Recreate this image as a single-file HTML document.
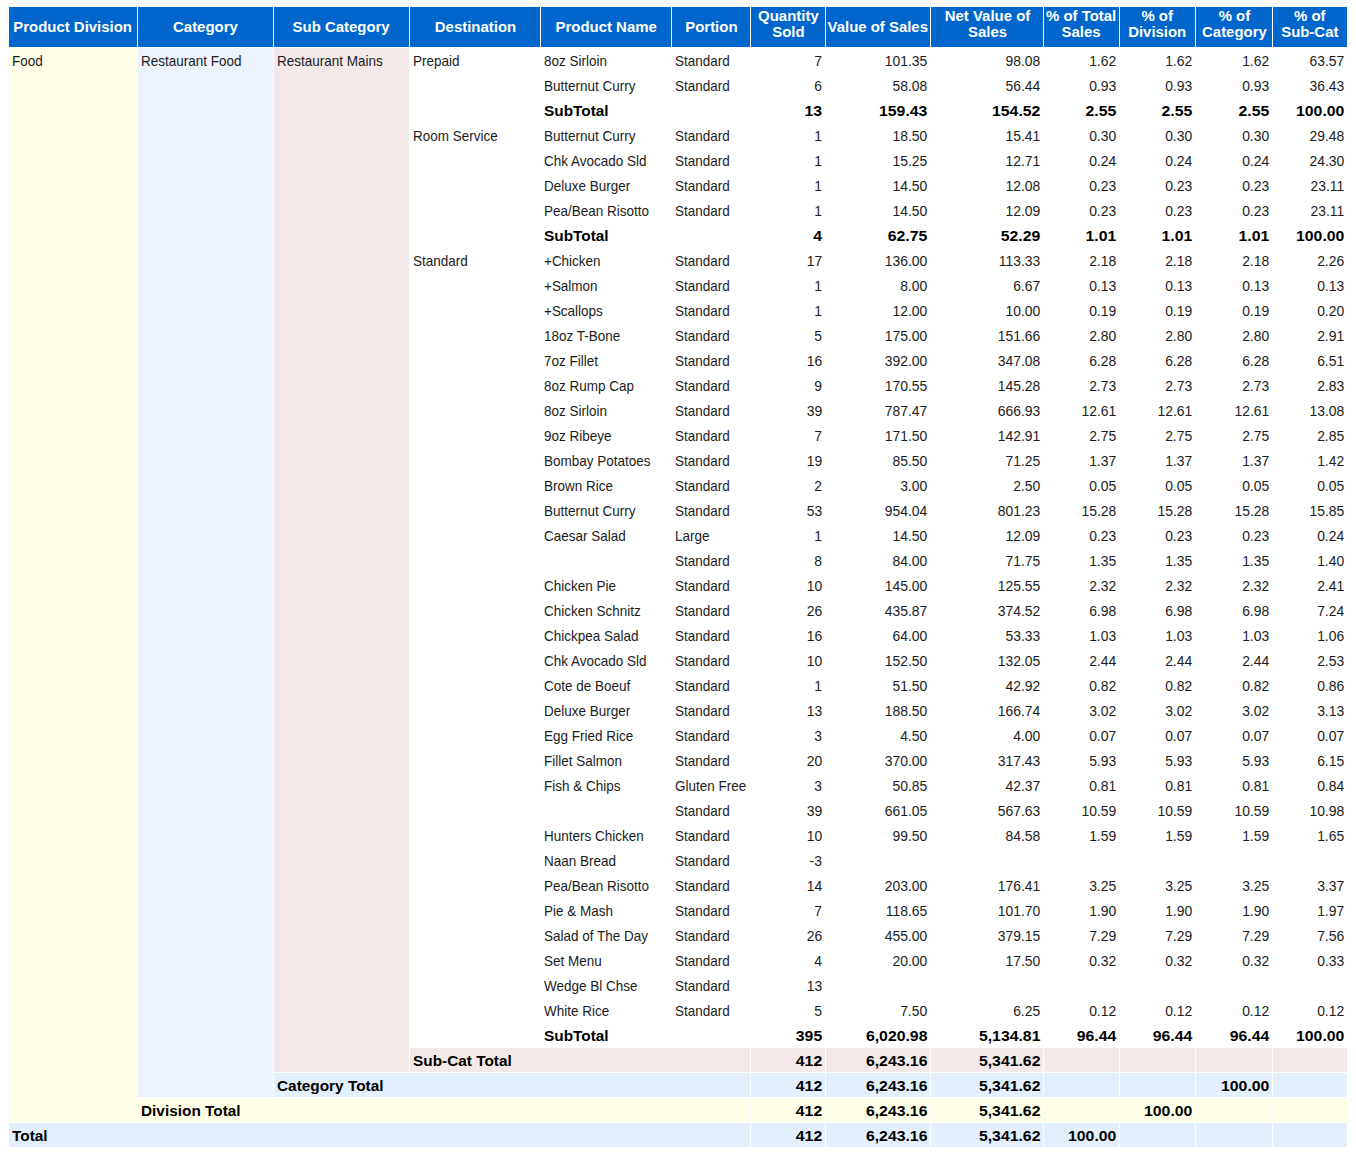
<!DOCTYPE html>
<html><head><meta charset="utf-8"><style>
html,body{margin:0;padding:0;background:#fff;width:1356px;height:1156px;overflow:hidden;position:relative}
.b{position:absolute}
.t{position:absolute;height:24px;line-height:26px;font-family:"Liberation Sans",sans-serif;font-size:14.5px;color:#1c1c1c;white-space:nowrap;padding:0 3px 0 2.5px;box-sizing:border-box;overflow:visible}
.t span{display:inline-block;transform:scaleX(0.93);transform-origin:0 50%}
.r{text-align:right}
.r span{transform-origin:100% 50%}
.rn span{transform:scaleX(0.96)}
.bt{font-weight:bold;color:#000}
.bt span{transform:scaleX(1.06);margin-left:0.5px}
.bn{font-weight:bold;color:#000}
.bn span{transform:scaleX(1.09)}
.h{position:absolute;display:flex;align-items:center;justify-content:center;text-align:center;font-family:"Liberation Sans",sans-serif;font-size:14.5px;font-weight:bold;color:#fff;line-height:16px;box-sizing:border-box;white-space:nowrap}
.h span{display:inline-block;transform:scaleX(1.03)}
.h2{padding-bottom:7px}
</style></head><body>
<div class="b" style="left:9px;top:7px;width:128px;height:40px;background:#0066cc"></div>
<div class="h" style="left:9px;top:7px;width:128px;height:40px"><span>Product Division</span></div>
<div class="b" style="left:138px;top:7px;width:135px;height:40px;background:#0066cc"></div>
<div class="h" style="left:138px;top:7px;width:135px;height:40px"><span>Category</span></div>
<div class="b" style="left:274px;top:7px;width:135px;height:40px;background:#0066cc"></div>
<div class="h" style="left:274px;top:7px;width:135px;height:40px"><span>Sub Category</span></div>
<div class="b" style="left:410px;top:7px;width:130px;height:40px;background:#0066cc"></div>
<div class="h" style="left:410px;top:7px;width:130px;height:40px"><span>Destination</span></div>
<div class="b" style="left:541px;top:7px;width:130px;height:40px;background:#0066cc"></div>
<div class="h" style="left:541px;top:7px;width:130px;height:40px"><span>Product Name</span></div>
<div class="b" style="left:672px;top:7px;width:78px;height:40px;background:#0066cc"></div>
<div class="h" style="left:672px;top:7px;width:78px;height:40px"><span>Portion</span></div>
<div class="b" style="left:751px;top:7px;width:74px;height:40px;background:#0066cc"></div>
<div class="h h2" style="left:751px;top:7px;width:74px;height:40px"><span>Quantity<br>Sold</span></div>
<div class="b" style="left:826px;top:7px;width:104px;height:40px;background:#0066cc"></div>
<div class="h" style="left:826px;top:7px;width:104px;height:40px"><span>Value of Sales</span></div>
<div class="b" style="left:931px;top:7px;width:112px;height:40px;background:#0066cc"></div>
<div class="h h2" style="left:931px;top:7px;width:112px;height:40px"><span>Net Value of<br>Sales</span></div>
<div class="b" style="left:1044px;top:7px;width:75px;height:40px;background:#0066cc"></div>
<div class="h h2" style="left:1044px;top:7px;width:75px;height:40px"><span>% of Total<br>Sales</span></div>
<div class="b" style="left:1120px;top:7px;width:75px;height:40px;background:#0066cc"></div>
<div class="h h2" style="left:1120px;top:7px;width:75px;height:40px"><span>% of<br>Division</span></div>
<div class="b" style="left:1196px;top:7px;width:76px;height:40px;background:#0066cc"></div>
<div class="h h2" style="left:1196px;top:7px;width:76px;height:40px"><span>% of<br>Category</span></div>
<div class="b" style="left:1273px;top:7px;width:74px;height:40px;background:#0066cc"></div>
<div class="h h2" style="left:1273px;top:7px;width:74px;height:40px"><span>% of<br>Sub-Cat</span></div>
<div class="b" style="left:9px;top:48px;width:128px;height:1074px;background:#ffffe8"></div>
<div class="b" style="left:138px;top:48px;width:135px;height:1049px;background:#edf3fe"></div>
<div class="b" style="left:274px;top:48px;width:135px;height:1024px;background:#f3e9e9"></div>
<div class="t" style="left:9px;top:48px;width:128px"><span>Food</span></div>
<div class="t" style="left:138px;top:48px;width:135px"><span>Restaurant Food</span></div>
<div class="t" style="left:274px;top:48px;width:135px"><span>Restaurant Mains</span></div>
<div class="t" style="left:410px;top:48px;width:130px"><span>Prepaid</span></div>
<div class="t" style="left:410px;top:123px;width:130px"><span>Room Service</span></div>
<div class="t" style="left:410px;top:248px;width:130px"><span>Standard</span></div>
<div class="t" style="left:541px;top:48px;width:130px"><span>8oz Sirloin</span></div>
<div class="t" style="left:672px;top:48px;width:78px"><span>Standard</span></div>
<div class="t rn r" style="left:751px;top:48px;width:74px"><span>7</span></div>
<div class="t rn r" style="left:826px;top:48px;width:104px"><span>101.35</span></div>
<div class="t rn r" style="left:931px;top:48px;width:112px"><span>98.08</span></div>
<div class="t rn r" style="left:1044px;top:48px;width:75px"><span>1.62</span></div>
<div class="t rn r" style="left:1120px;top:48px;width:75px"><span>1.62</span></div>
<div class="t rn r" style="left:1196px;top:48px;width:76px"><span>1.62</span></div>
<div class="t rn r" style="left:1273px;top:48px;width:74px"><span>63.57</span></div>
<div class="t" style="left:541px;top:73px;width:130px"><span>Butternut Curry</span></div>
<div class="t" style="left:672px;top:73px;width:78px"><span>Standard</span></div>
<div class="t rn r" style="left:751px;top:73px;width:74px"><span>6</span></div>
<div class="t rn r" style="left:826px;top:73px;width:104px"><span>58.08</span></div>
<div class="t rn r" style="left:931px;top:73px;width:112px"><span>56.44</span></div>
<div class="t rn r" style="left:1044px;top:73px;width:75px"><span>0.93</span></div>
<div class="t rn r" style="left:1120px;top:73px;width:75px"><span>0.93</span></div>
<div class="t rn r" style="left:1196px;top:73px;width:76px"><span>0.93</span></div>
<div class="t rn r" style="left:1273px;top:73px;width:74px"><span>36.43</span></div>
<div class="t bt" style="left:541px;top:98px;width:130px"><span>SubTotal</span></div>
<div class="t bn r" style="left:751px;top:98px;width:74px"><span>13</span></div>
<div class="t bn r" style="left:826px;top:98px;width:104px"><span>159.43</span></div>
<div class="t bn r" style="left:931px;top:98px;width:112px"><span>154.52</span></div>
<div class="t bn r" style="left:1044px;top:98px;width:75px"><span>2.55</span></div>
<div class="t bn r" style="left:1120px;top:98px;width:75px"><span>2.55</span></div>
<div class="t bn r" style="left:1196px;top:98px;width:76px"><span>2.55</span></div>
<div class="t bn r" style="left:1273px;top:98px;width:74px"><span>100.00</span></div>
<div class="t" style="left:541px;top:123px;width:130px"><span>Butternut Curry</span></div>
<div class="t" style="left:672px;top:123px;width:78px"><span>Standard</span></div>
<div class="t rn r" style="left:751px;top:123px;width:74px"><span>1</span></div>
<div class="t rn r" style="left:826px;top:123px;width:104px"><span>18.50</span></div>
<div class="t rn r" style="left:931px;top:123px;width:112px"><span>15.41</span></div>
<div class="t rn r" style="left:1044px;top:123px;width:75px"><span>0.30</span></div>
<div class="t rn r" style="left:1120px;top:123px;width:75px"><span>0.30</span></div>
<div class="t rn r" style="left:1196px;top:123px;width:76px"><span>0.30</span></div>
<div class="t rn r" style="left:1273px;top:123px;width:74px"><span>29.48</span></div>
<div class="t" style="left:541px;top:148px;width:130px"><span>Chk Avocado Sld</span></div>
<div class="t" style="left:672px;top:148px;width:78px"><span>Standard</span></div>
<div class="t rn r" style="left:751px;top:148px;width:74px"><span>1</span></div>
<div class="t rn r" style="left:826px;top:148px;width:104px"><span>15.25</span></div>
<div class="t rn r" style="left:931px;top:148px;width:112px"><span>12.71</span></div>
<div class="t rn r" style="left:1044px;top:148px;width:75px"><span>0.24</span></div>
<div class="t rn r" style="left:1120px;top:148px;width:75px"><span>0.24</span></div>
<div class="t rn r" style="left:1196px;top:148px;width:76px"><span>0.24</span></div>
<div class="t rn r" style="left:1273px;top:148px;width:74px"><span>24.30</span></div>
<div class="t" style="left:541px;top:173px;width:130px"><span>Deluxe Burger</span></div>
<div class="t" style="left:672px;top:173px;width:78px"><span>Standard</span></div>
<div class="t rn r" style="left:751px;top:173px;width:74px"><span>1</span></div>
<div class="t rn r" style="left:826px;top:173px;width:104px"><span>14.50</span></div>
<div class="t rn r" style="left:931px;top:173px;width:112px"><span>12.08</span></div>
<div class="t rn r" style="left:1044px;top:173px;width:75px"><span>0.23</span></div>
<div class="t rn r" style="left:1120px;top:173px;width:75px"><span>0.23</span></div>
<div class="t rn r" style="left:1196px;top:173px;width:76px"><span>0.23</span></div>
<div class="t rn r" style="left:1273px;top:173px;width:74px"><span>23.11</span></div>
<div class="t" style="left:541px;top:198px;width:130px"><span>Pea/Bean Risotto</span></div>
<div class="t" style="left:672px;top:198px;width:78px"><span>Standard</span></div>
<div class="t rn r" style="left:751px;top:198px;width:74px"><span>1</span></div>
<div class="t rn r" style="left:826px;top:198px;width:104px"><span>14.50</span></div>
<div class="t rn r" style="left:931px;top:198px;width:112px"><span>12.09</span></div>
<div class="t rn r" style="left:1044px;top:198px;width:75px"><span>0.23</span></div>
<div class="t rn r" style="left:1120px;top:198px;width:75px"><span>0.23</span></div>
<div class="t rn r" style="left:1196px;top:198px;width:76px"><span>0.23</span></div>
<div class="t rn r" style="left:1273px;top:198px;width:74px"><span>23.11</span></div>
<div class="t bt" style="left:541px;top:223px;width:130px"><span>SubTotal</span></div>
<div class="t bn r" style="left:751px;top:223px;width:74px"><span>4</span></div>
<div class="t bn r" style="left:826px;top:223px;width:104px"><span>62.75</span></div>
<div class="t bn r" style="left:931px;top:223px;width:112px"><span>52.29</span></div>
<div class="t bn r" style="left:1044px;top:223px;width:75px"><span>1.01</span></div>
<div class="t bn r" style="left:1120px;top:223px;width:75px"><span>1.01</span></div>
<div class="t bn r" style="left:1196px;top:223px;width:76px"><span>1.01</span></div>
<div class="t bn r" style="left:1273px;top:223px;width:74px"><span>100.00</span></div>
<div class="t" style="left:541px;top:248px;width:130px"><span>+Chicken</span></div>
<div class="t" style="left:672px;top:248px;width:78px"><span>Standard</span></div>
<div class="t rn r" style="left:751px;top:248px;width:74px"><span>17</span></div>
<div class="t rn r" style="left:826px;top:248px;width:104px"><span>136.00</span></div>
<div class="t rn r" style="left:931px;top:248px;width:112px"><span>113.33</span></div>
<div class="t rn r" style="left:1044px;top:248px;width:75px"><span>2.18</span></div>
<div class="t rn r" style="left:1120px;top:248px;width:75px"><span>2.18</span></div>
<div class="t rn r" style="left:1196px;top:248px;width:76px"><span>2.18</span></div>
<div class="t rn r" style="left:1273px;top:248px;width:74px"><span>2.26</span></div>
<div class="t" style="left:541px;top:273px;width:130px"><span>+Salmon</span></div>
<div class="t" style="left:672px;top:273px;width:78px"><span>Standard</span></div>
<div class="t rn r" style="left:751px;top:273px;width:74px"><span>1</span></div>
<div class="t rn r" style="left:826px;top:273px;width:104px"><span>8.00</span></div>
<div class="t rn r" style="left:931px;top:273px;width:112px"><span>6.67</span></div>
<div class="t rn r" style="left:1044px;top:273px;width:75px"><span>0.13</span></div>
<div class="t rn r" style="left:1120px;top:273px;width:75px"><span>0.13</span></div>
<div class="t rn r" style="left:1196px;top:273px;width:76px"><span>0.13</span></div>
<div class="t rn r" style="left:1273px;top:273px;width:74px"><span>0.13</span></div>
<div class="t" style="left:541px;top:298px;width:130px"><span>+Scallops</span></div>
<div class="t" style="left:672px;top:298px;width:78px"><span>Standard</span></div>
<div class="t rn r" style="left:751px;top:298px;width:74px"><span>1</span></div>
<div class="t rn r" style="left:826px;top:298px;width:104px"><span>12.00</span></div>
<div class="t rn r" style="left:931px;top:298px;width:112px"><span>10.00</span></div>
<div class="t rn r" style="left:1044px;top:298px;width:75px"><span>0.19</span></div>
<div class="t rn r" style="left:1120px;top:298px;width:75px"><span>0.19</span></div>
<div class="t rn r" style="left:1196px;top:298px;width:76px"><span>0.19</span></div>
<div class="t rn r" style="left:1273px;top:298px;width:74px"><span>0.20</span></div>
<div class="t" style="left:541px;top:323px;width:130px"><span>18oz T-Bone</span></div>
<div class="t" style="left:672px;top:323px;width:78px"><span>Standard</span></div>
<div class="t rn r" style="left:751px;top:323px;width:74px"><span>5</span></div>
<div class="t rn r" style="left:826px;top:323px;width:104px"><span>175.00</span></div>
<div class="t rn r" style="left:931px;top:323px;width:112px"><span>151.66</span></div>
<div class="t rn r" style="left:1044px;top:323px;width:75px"><span>2.80</span></div>
<div class="t rn r" style="left:1120px;top:323px;width:75px"><span>2.80</span></div>
<div class="t rn r" style="left:1196px;top:323px;width:76px"><span>2.80</span></div>
<div class="t rn r" style="left:1273px;top:323px;width:74px"><span>2.91</span></div>
<div class="t" style="left:541px;top:348px;width:130px"><span>7oz Fillet</span></div>
<div class="t" style="left:672px;top:348px;width:78px"><span>Standard</span></div>
<div class="t rn r" style="left:751px;top:348px;width:74px"><span>16</span></div>
<div class="t rn r" style="left:826px;top:348px;width:104px"><span>392.00</span></div>
<div class="t rn r" style="left:931px;top:348px;width:112px"><span>347.08</span></div>
<div class="t rn r" style="left:1044px;top:348px;width:75px"><span>6.28</span></div>
<div class="t rn r" style="left:1120px;top:348px;width:75px"><span>6.28</span></div>
<div class="t rn r" style="left:1196px;top:348px;width:76px"><span>6.28</span></div>
<div class="t rn r" style="left:1273px;top:348px;width:74px"><span>6.51</span></div>
<div class="t" style="left:541px;top:373px;width:130px"><span>8oz Rump Cap</span></div>
<div class="t" style="left:672px;top:373px;width:78px"><span>Standard</span></div>
<div class="t rn r" style="left:751px;top:373px;width:74px"><span>9</span></div>
<div class="t rn r" style="left:826px;top:373px;width:104px"><span>170.55</span></div>
<div class="t rn r" style="left:931px;top:373px;width:112px"><span>145.28</span></div>
<div class="t rn r" style="left:1044px;top:373px;width:75px"><span>2.73</span></div>
<div class="t rn r" style="left:1120px;top:373px;width:75px"><span>2.73</span></div>
<div class="t rn r" style="left:1196px;top:373px;width:76px"><span>2.73</span></div>
<div class="t rn r" style="left:1273px;top:373px;width:74px"><span>2.83</span></div>
<div class="t" style="left:541px;top:398px;width:130px"><span>8oz Sirloin</span></div>
<div class="t" style="left:672px;top:398px;width:78px"><span>Standard</span></div>
<div class="t rn r" style="left:751px;top:398px;width:74px"><span>39</span></div>
<div class="t rn r" style="left:826px;top:398px;width:104px"><span>787.47</span></div>
<div class="t rn r" style="left:931px;top:398px;width:112px"><span>666.93</span></div>
<div class="t rn r" style="left:1044px;top:398px;width:75px"><span>12.61</span></div>
<div class="t rn r" style="left:1120px;top:398px;width:75px"><span>12.61</span></div>
<div class="t rn r" style="left:1196px;top:398px;width:76px"><span>12.61</span></div>
<div class="t rn r" style="left:1273px;top:398px;width:74px"><span>13.08</span></div>
<div class="t" style="left:541px;top:423px;width:130px"><span>9oz Ribeye</span></div>
<div class="t" style="left:672px;top:423px;width:78px"><span>Standard</span></div>
<div class="t rn r" style="left:751px;top:423px;width:74px"><span>7</span></div>
<div class="t rn r" style="left:826px;top:423px;width:104px"><span>171.50</span></div>
<div class="t rn r" style="left:931px;top:423px;width:112px"><span>142.91</span></div>
<div class="t rn r" style="left:1044px;top:423px;width:75px"><span>2.75</span></div>
<div class="t rn r" style="left:1120px;top:423px;width:75px"><span>2.75</span></div>
<div class="t rn r" style="left:1196px;top:423px;width:76px"><span>2.75</span></div>
<div class="t rn r" style="left:1273px;top:423px;width:74px"><span>2.85</span></div>
<div class="t" style="left:541px;top:448px;width:130px"><span>Bombay Potatoes</span></div>
<div class="t" style="left:672px;top:448px;width:78px"><span>Standard</span></div>
<div class="t rn r" style="left:751px;top:448px;width:74px"><span>19</span></div>
<div class="t rn r" style="left:826px;top:448px;width:104px"><span>85.50</span></div>
<div class="t rn r" style="left:931px;top:448px;width:112px"><span>71.25</span></div>
<div class="t rn r" style="left:1044px;top:448px;width:75px"><span>1.37</span></div>
<div class="t rn r" style="left:1120px;top:448px;width:75px"><span>1.37</span></div>
<div class="t rn r" style="left:1196px;top:448px;width:76px"><span>1.37</span></div>
<div class="t rn r" style="left:1273px;top:448px;width:74px"><span>1.42</span></div>
<div class="t" style="left:541px;top:473px;width:130px"><span>Brown Rice</span></div>
<div class="t" style="left:672px;top:473px;width:78px"><span>Standard</span></div>
<div class="t rn r" style="left:751px;top:473px;width:74px"><span>2</span></div>
<div class="t rn r" style="left:826px;top:473px;width:104px"><span>3.00</span></div>
<div class="t rn r" style="left:931px;top:473px;width:112px"><span>2.50</span></div>
<div class="t rn r" style="left:1044px;top:473px;width:75px"><span>0.05</span></div>
<div class="t rn r" style="left:1120px;top:473px;width:75px"><span>0.05</span></div>
<div class="t rn r" style="left:1196px;top:473px;width:76px"><span>0.05</span></div>
<div class="t rn r" style="left:1273px;top:473px;width:74px"><span>0.05</span></div>
<div class="t" style="left:541px;top:498px;width:130px"><span>Butternut Curry</span></div>
<div class="t" style="left:672px;top:498px;width:78px"><span>Standard</span></div>
<div class="t rn r" style="left:751px;top:498px;width:74px"><span>53</span></div>
<div class="t rn r" style="left:826px;top:498px;width:104px"><span>954.04</span></div>
<div class="t rn r" style="left:931px;top:498px;width:112px"><span>801.23</span></div>
<div class="t rn r" style="left:1044px;top:498px;width:75px"><span>15.28</span></div>
<div class="t rn r" style="left:1120px;top:498px;width:75px"><span>15.28</span></div>
<div class="t rn r" style="left:1196px;top:498px;width:76px"><span>15.28</span></div>
<div class="t rn r" style="left:1273px;top:498px;width:74px"><span>15.85</span></div>
<div class="t" style="left:541px;top:523px;width:130px"><span>Caesar Salad</span></div>
<div class="t" style="left:672px;top:523px;width:78px"><span>Large</span></div>
<div class="t rn r" style="left:751px;top:523px;width:74px"><span>1</span></div>
<div class="t rn r" style="left:826px;top:523px;width:104px"><span>14.50</span></div>
<div class="t rn r" style="left:931px;top:523px;width:112px"><span>12.09</span></div>
<div class="t rn r" style="left:1044px;top:523px;width:75px"><span>0.23</span></div>
<div class="t rn r" style="left:1120px;top:523px;width:75px"><span>0.23</span></div>
<div class="t rn r" style="left:1196px;top:523px;width:76px"><span>0.23</span></div>
<div class="t rn r" style="left:1273px;top:523px;width:74px"><span>0.24</span></div>
<div class="t" style="left:672px;top:548px;width:78px"><span>Standard</span></div>
<div class="t rn r" style="left:751px;top:548px;width:74px"><span>8</span></div>
<div class="t rn r" style="left:826px;top:548px;width:104px"><span>84.00</span></div>
<div class="t rn r" style="left:931px;top:548px;width:112px"><span>71.75</span></div>
<div class="t rn r" style="left:1044px;top:548px;width:75px"><span>1.35</span></div>
<div class="t rn r" style="left:1120px;top:548px;width:75px"><span>1.35</span></div>
<div class="t rn r" style="left:1196px;top:548px;width:76px"><span>1.35</span></div>
<div class="t rn r" style="left:1273px;top:548px;width:74px"><span>1.40</span></div>
<div class="t" style="left:541px;top:573px;width:130px"><span>Chicken Pie</span></div>
<div class="t" style="left:672px;top:573px;width:78px"><span>Standard</span></div>
<div class="t rn r" style="left:751px;top:573px;width:74px"><span>10</span></div>
<div class="t rn r" style="left:826px;top:573px;width:104px"><span>145.00</span></div>
<div class="t rn r" style="left:931px;top:573px;width:112px"><span>125.55</span></div>
<div class="t rn r" style="left:1044px;top:573px;width:75px"><span>2.32</span></div>
<div class="t rn r" style="left:1120px;top:573px;width:75px"><span>2.32</span></div>
<div class="t rn r" style="left:1196px;top:573px;width:76px"><span>2.32</span></div>
<div class="t rn r" style="left:1273px;top:573px;width:74px"><span>2.41</span></div>
<div class="t" style="left:541px;top:598px;width:130px"><span>Chicken Schnitz</span></div>
<div class="t" style="left:672px;top:598px;width:78px"><span>Standard</span></div>
<div class="t rn r" style="left:751px;top:598px;width:74px"><span>26</span></div>
<div class="t rn r" style="left:826px;top:598px;width:104px"><span>435.87</span></div>
<div class="t rn r" style="left:931px;top:598px;width:112px"><span>374.52</span></div>
<div class="t rn r" style="left:1044px;top:598px;width:75px"><span>6.98</span></div>
<div class="t rn r" style="left:1120px;top:598px;width:75px"><span>6.98</span></div>
<div class="t rn r" style="left:1196px;top:598px;width:76px"><span>6.98</span></div>
<div class="t rn r" style="left:1273px;top:598px;width:74px"><span>7.24</span></div>
<div class="t" style="left:541px;top:623px;width:130px"><span>Chickpea Salad</span></div>
<div class="t" style="left:672px;top:623px;width:78px"><span>Standard</span></div>
<div class="t rn r" style="left:751px;top:623px;width:74px"><span>16</span></div>
<div class="t rn r" style="left:826px;top:623px;width:104px"><span>64.00</span></div>
<div class="t rn r" style="left:931px;top:623px;width:112px"><span>53.33</span></div>
<div class="t rn r" style="left:1044px;top:623px;width:75px"><span>1.03</span></div>
<div class="t rn r" style="left:1120px;top:623px;width:75px"><span>1.03</span></div>
<div class="t rn r" style="left:1196px;top:623px;width:76px"><span>1.03</span></div>
<div class="t rn r" style="left:1273px;top:623px;width:74px"><span>1.06</span></div>
<div class="t" style="left:541px;top:648px;width:130px"><span>Chk Avocado Sld</span></div>
<div class="t" style="left:672px;top:648px;width:78px"><span>Standard</span></div>
<div class="t rn r" style="left:751px;top:648px;width:74px"><span>10</span></div>
<div class="t rn r" style="left:826px;top:648px;width:104px"><span>152.50</span></div>
<div class="t rn r" style="left:931px;top:648px;width:112px"><span>132.05</span></div>
<div class="t rn r" style="left:1044px;top:648px;width:75px"><span>2.44</span></div>
<div class="t rn r" style="left:1120px;top:648px;width:75px"><span>2.44</span></div>
<div class="t rn r" style="left:1196px;top:648px;width:76px"><span>2.44</span></div>
<div class="t rn r" style="left:1273px;top:648px;width:74px"><span>2.53</span></div>
<div class="t" style="left:541px;top:673px;width:130px"><span>Cote de Boeuf</span></div>
<div class="t" style="left:672px;top:673px;width:78px"><span>Standard</span></div>
<div class="t rn r" style="left:751px;top:673px;width:74px"><span>1</span></div>
<div class="t rn r" style="left:826px;top:673px;width:104px"><span>51.50</span></div>
<div class="t rn r" style="left:931px;top:673px;width:112px"><span>42.92</span></div>
<div class="t rn r" style="left:1044px;top:673px;width:75px"><span>0.82</span></div>
<div class="t rn r" style="left:1120px;top:673px;width:75px"><span>0.82</span></div>
<div class="t rn r" style="left:1196px;top:673px;width:76px"><span>0.82</span></div>
<div class="t rn r" style="left:1273px;top:673px;width:74px"><span>0.86</span></div>
<div class="t" style="left:541px;top:698px;width:130px"><span>Deluxe Burger</span></div>
<div class="t" style="left:672px;top:698px;width:78px"><span>Standard</span></div>
<div class="t rn r" style="left:751px;top:698px;width:74px"><span>13</span></div>
<div class="t rn r" style="left:826px;top:698px;width:104px"><span>188.50</span></div>
<div class="t rn r" style="left:931px;top:698px;width:112px"><span>166.74</span></div>
<div class="t rn r" style="left:1044px;top:698px;width:75px"><span>3.02</span></div>
<div class="t rn r" style="left:1120px;top:698px;width:75px"><span>3.02</span></div>
<div class="t rn r" style="left:1196px;top:698px;width:76px"><span>3.02</span></div>
<div class="t rn r" style="left:1273px;top:698px;width:74px"><span>3.13</span></div>
<div class="t" style="left:541px;top:723px;width:130px"><span>Egg Fried Rice</span></div>
<div class="t" style="left:672px;top:723px;width:78px"><span>Standard</span></div>
<div class="t rn r" style="left:751px;top:723px;width:74px"><span>3</span></div>
<div class="t rn r" style="left:826px;top:723px;width:104px"><span>4.50</span></div>
<div class="t rn r" style="left:931px;top:723px;width:112px"><span>4.00</span></div>
<div class="t rn r" style="left:1044px;top:723px;width:75px"><span>0.07</span></div>
<div class="t rn r" style="left:1120px;top:723px;width:75px"><span>0.07</span></div>
<div class="t rn r" style="left:1196px;top:723px;width:76px"><span>0.07</span></div>
<div class="t rn r" style="left:1273px;top:723px;width:74px"><span>0.07</span></div>
<div class="t" style="left:541px;top:748px;width:130px"><span>Fillet Salmon</span></div>
<div class="t" style="left:672px;top:748px;width:78px"><span>Standard</span></div>
<div class="t rn r" style="left:751px;top:748px;width:74px"><span>20</span></div>
<div class="t rn r" style="left:826px;top:748px;width:104px"><span>370.00</span></div>
<div class="t rn r" style="left:931px;top:748px;width:112px"><span>317.43</span></div>
<div class="t rn r" style="left:1044px;top:748px;width:75px"><span>5.93</span></div>
<div class="t rn r" style="left:1120px;top:748px;width:75px"><span>5.93</span></div>
<div class="t rn r" style="left:1196px;top:748px;width:76px"><span>5.93</span></div>
<div class="t rn r" style="left:1273px;top:748px;width:74px"><span>6.15</span></div>
<div class="t" style="left:541px;top:773px;width:130px"><span>Fish &amp; Chips</span></div>
<div class="t" style="left:672px;top:773px;width:78px"><span>Gluten Free</span></div>
<div class="t rn r" style="left:751px;top:773px;width:74px"><span>3</span></div>
<div class="t rn r" style="left:826px;top:773px;width:104px"><span>50.85</span></div>
<div class="t rn r" style="left:931px;top:773px;width:112px"><span>42.37</span></div>
<div class="t rn r" style="left:1044px;top:773px;width:75px"><span>0.81</span></div>
<div class="t rn r" style="left:1120px;top:773px;width:75px"><span>0.81</span></div>
<div class="t rn r" style="left:1196px;top:773px;width:76px"><span>0.81</span></div>
<div class="t rn r" style="left:1273px;top:773px;width:74px"><span>0.84</span></div>
<div class="t" style="left:672px;top:798px;width:78px"><span>Standard</span></div>
<div class="t rn r" style="left:751px;top:798px;width:74px"><span>39</span></div>
<div class="t rn r" style="left:826px;top:798px;width:104px"><span>661.05</span></div>
<div class="t rn r" style="left:931px;top:798px;width:112px"><span>567.63</span></div>
<div class="t rn r" style="left:1044px;top:798px;width:75px"><span>10.59</span></div>
<div class="t rn r" style="left:1120px;top:798px;width:75px"><span>10.59</span></div>
<div class="t rn r" style="left:1196px;top:798px;width:76px"><span>10.59</span></div>
<div class="t rn r" style="left:1273px;top:798px;width:74px"><span>10.98</span></div>
<div class="t" style="left:541px;top:823px;width:130px"><span>Hunters Chicken</span></div>
<div class="t" style="left:672px;top:823px;width:78px"><span>Standard</span></div>
<div class="t rn r" style="left:751px;top:823px;width:74px"><span>10</span></div>
<div class="t rn r" style="left:826px;top:823px;width:104px"><span>99.50</span></div>
<div class="t rn r" style="left:931px;top:823px;width:112px"><span>84.58</span></div>
<div class="t rn r" style="left:1044px;top:823px;width:75px"><span>1.59</span></div>
<div class="t rn r" style="left:1120px;top:823px;width:75px"><span>1.59</span></div>
<div class="t rn r" style="left:1196px;top:823px;width:76px"><span>1.59</span></div>
<div class="t rn r" style="left:1273px;top:823px;width:74px"><span>1.65</span></div>
<div class="t" style="left:541px;top:848px;width:130px"><span>Naan Bread</span></div>
<div class="t" style="left:672px;top:848px;width:78px"><span>Standard</span></div>
<div class="t rn r" style="left:751px;top:848px;width:74px"><span>-3</span></div>
<div class="t" style="left:541px;top:873px;width:130px"><span>Pea/Bean Risotto</span></div>
<div class="t" style="left:672px;top:873px;width:78px"><span>Standard</span></div>
<div class="t rn r" style="left:751px;top:873px;width:74px"><span>14</span></div>
<div class="t rn r" style="left:826px;top:873px;width:104px"><span>203.00</span></div>
<div class="t rn r" style="left:931px;top:873px;width:112px"><span>176.41</span></div>
<div class="t rn r" style="left:1044px;top:873px;width:75px"><span>3.25</span></div>
<div class="t rn r" style="left:1120px;top:873px;width:75px"><span>3.25</span></div>
<div class="t rn r" style="left:1196px;top:873px;width:76px"><span>3.25</span></div>
<div class="t rn r" style="left:1273px;top:873px;width:74px"><span>3.37</span></div>
<div class="t" style="left:541px;top:898px;width:130px"><span>Pie &amp; Mash</span></div>
<div class="t" style="left:672px;top:898px;width:78px"><span>Standard</span></div>
<div class="t rn r" style="left:751px;top:898px;width:74px"><span>7</span></div>
<div class="t rn r" style="left:826px;top:898px;width:104px"><span>118.65</span></div>
<div class="t rn r" style="left:931px;top:898px;width:112px"><span>101.70</span></div>
<div class="t rn r" style="left:1044px;top:898px;width:75px"><span>1.90</span></div>
<div class="t rn r" style="left:1120px;top:898px;width:75px"><span>1.90</span></div>
<div class="t rn r" style="left:1196px;top:898px;width:76px"><span>1.90</span></div>
<div class="t rn r" style="left:1273px;top:898px;width:74px"><span>1.97</span></div>
<div class="t" style="left:541px;top:923px;width:130px"><span>Salad of The Day</span></div>
<div class="t" style="left:672px;top:923px;width:78px"><span>Standard</span></div>
<div class="t rn r" style="left:751px;top:923px;width:74px"><span>26</span></div>
<div class="t rn r" style="left:826px;top:923px;width:104px"><span>455.00</span></div>
<div class="t rn r" style="left:931px;top:923px;width:112px"><span>379.15</span></div>
<div class="t rn r" style="left:1044px;top:923px;width:75px"><span>7.29</span></div>
<div class="t rn r" style="left:1120px;top:923px;width:75px"><span>7.29</span></div>
<div class="t rn r" style="left:1196px;top:923px;width:76px"><span>7.29</span></div>
<div class="t rn r" style="left:1273px;top:923px;width:74px"><span>7.56</span></div>
<div class="t" style="left:541px;top:948px;width:130px"><span>Set Menu</span></div>
<div class="t" style="left:672px;top:948px;width:78px"><span>Standard</span></div>
<div class="t rn r" style="left:751px;top:948px;width:74px"><span>4</span></div>
<div class="t rn r" style="left:826px;top:948px;width:104px"><span>20.00</span></div>
<div class="t rn r" style="left:931px;top:948px;width:112px"><span>17.50</span></div>
<div class="t rn r" style="left:1044px;top:948px;width:75px"><span>0.32</span></div>
<div class="t rn r" style="left:1120px;top:948px;width:75px"><span>0.32</span></div>
<div class="t rn r" style="left:1196px;top:948px;width:76px"><span>0.32</span></div>
<div class="t rn r" style="left:1273px;top:948px;width:74px"><span>0.33</span></div>
<div class="t" style="left:541px;top:973px;width:130px"><span>Wedge Bl Chse</span></div>
<div class="t" style="left:672px;top:973px;width:78px"><span>Standard</span></div>
<div class="t rn r" style="left:751px;top:973px;width:74px"><span>13</span></div>
<div class="t" style="left:541px;top:998px;width:130px"><span>White Rice</span></div>
<div class="t" style="left:672px;top:998px;width:78px"><span>Standard</span></div>
<div class="t rn r" style="left:751px;top:998px;width:74px"><span>5</span></div>
<div class="t rn r" style="left:826px;top:998px;width:104px"><span>7.50</span></div>
<div class="t rn r" style="left:931px;top:998px;width:112px"><span>6.25</span></div>
<div class="t rn r" style="left:1044px;top:998px;width:75px"><span>0.12</span></div>
<div class="t rn r" style="left:1120px;top:998px;width:75px"><span>0.12</span></div>
<div class="t rn r" style="left:1196px;top:998px;width:76px"><span>0.12</span></div>
<div class="t rn r" style="left:1273px;top:998px;width:74px"><span>0.12</span></div>
<div class="t bt" style="left:541px;top:1023px;width:130px"><span>SubTotal</span></div>
<div class="t bn r" style="left:751px;top:1023px;width:74px"><span>395</span></div>
<div class="t bn r" style="left:826px;top:1023px;width:104px"><span>6,020.98</span></div>
<div class="t bn r" style="left:931px;top:1023px;width:112px"><span>5,134.81</span></div>
<div class="t bn r" style="left:1044px;top:1023px;width:75px"><span>96.44</span></div>
<div class="t bn r" style="left:1120px;top:1023px;width:75px"><span>96.44</span></div>
<div class="t bn r" style="left:1196px;top:1023px;width:76px"><span>96.44</span></div>
<div class="t bn r" style="left:1273px;top:1023px;width:74px"><span>100.00</span></div>
<div class="b" style="left:410px;top:1048px;width:340px;height:24px;background:#f3e9e9"></div>
<div class="t bt" style="left:410px;top:1048px;width:340px"><span>Sub-Cat Total</span></div>
<div class="b" style="left:751px;top:1048px;width:74px;height:24px;background:#f3e9e9"></div>
<div class="t bn r" style="left:751px;top:1048px;width:74px"><span>412</span></div>
<div class="b" style="left:826px;top:1048px;width:104px;height:24px;background:#f3e9e9"></div>
<div class="t bn r" style="left:826px;top:1048px;width:104px"><span>6,243.16</span></div>
<div class="b" style="left:931px;top:1048px;width:112px;height:24px;background:#f3e9e9"></div>
<div class="t bn r" style="left:931px;top:1048px;width:112px"><span>5,341.62</span></div>
<div class="b" style="left:1044px;top:1048px;width:75px;height:24px;background:#f3e9e9"></div>
<div class="b" style="left:1120px;top:1048px;width:75px;height:24px;background:#f3e9e9"></div>
<div class="b" style="left:1196px;top:1048px;width:76px;height:24px;background:#f3e9e9"></div>
<div class="b" style="left:1273px;top:1048px;width:74px;height:24px;background:#f3e9e9"></div>
<div class="b" style="left:274px;top:1073px;width:476px;height:24px;background:#e3effc"></div>
<div class="t bt" style="left:274px;top:1073px;width:476px"><span>Category Total</span></div>
<div class="b" style="left:751px;top:1073px;width:74px;height:24px;background:#e3effc"></div>
<div class="t bn r" style="left:751px;top:1073px;width:74px"><span>412</span></div>
<div class="b" style="left:826px;top:1073px;width:104px;height:24px;background:#e3effc"></div>
<div class="t bn r" style="left:826px;top:1073px;width:104px"><span>6,243.16</span></div>
<div class="b" style="left:931px;top:1073px;width:112px;height:24px;background:#e3effc"></div>
<div class="t bn r" style="left:931px;top:1073px;width:112px"><span>5,341.62</span></div>
<div class="b" style="left:1044px;top:1073px;width:75px;height:24px;background:#e3effc"></div>
<div class="b" style="left:1120px;top:1073px;width:75px;height:24px;background:#e3effc"></div>
<div class="b" style="left:1196px;top:1073px;width:76px;height:24px;background:#e3effc"></div>
<div class="t bn r" style="left:1196px;top:1073px;width:76px"><span>100.00</span></div>
<div class="b" style="left:1273px;top:1073px;width:74px;height:24px;background:#e3effc"></div>
<div class="b" style="left:138px;top:1098px;width:612px;height:24px;background:#ffffe8"></div>
<div class="t bt" style="left:138px;top:1098px;width:612px"><span>Division Total</span></div>
<div class="b" style="left:751px;top:1098px;width:74px;height:24px;background:#ffffe8"></div>
<div class="t bn r" style="left:751px;top:1098px;width:74px"><span>412</span></div>
<div class="b" style="left:826px;top:1098px;width:104px;height:24px;background:#ffffe8"></div>
<div class="t bn r" style="left:826px;top:1098px;width:104px"><span>6,243.16</span></div>
<div class="b" style="left:931px;top:1098px;width:112px;height:24px;background:#ffffe8"></div>
<div class="t bn r" style="left:931px;top:1098px;width:112px"><span>5,341.62</span></div>
<div class="b" style="left:1044px;top:1098px;width:75px;height:24px;background:#ffffe8"></div>
<div class="b" style="left:1120px;top:1098px;width:75px;height:24px;background:#ffffe8"></div>
<div class="t bn r" style="left:1120px;top:1098px;width:75px"><span>100.00</span></div>
<div class="b" style="left:1196px;top:1098px;width:76px;height:24px;background:#ffffe8"></div>
<div class="b" style="left:1273px;top:1098px;width:74px;height:24px;background:#ffffe8"></div>
<div class="b" style="left:9px;top:1123px;width:741px;height:24px;background:#e3effc"></div>
<div class="t bt" style="left:9px;top:1123px;width:741px"><span>Total</span></div>
<div class="b" style="left:751px;top:1123px;width:74px;height:24px;background:#e3effc"></div>
<div class="t bn r" style="left:751px;top:1123px;width:74px"><span>412</span></div>
<div class="b" style="left:826px;top:1123px;width:104px;height:24px;background:#e3effc"></div>
<div class="t bn r" style="left:826px;top:1123px;width:104px"><span>6,243.16</span></div>
<div class="b" style="left:931px;top:1123px;width:112px;height:24px;background:#e3effc"></div>
<div class="t bn r" style="left:931px;top:1123px;width:112px"><span>5,341.62</span></div>
<div class="b" style="left:1044px;top:1123px;width:75px;height:24px;background:#e3effc"></div>
<div class="t bn r" style="left:1044px;top:1123px;width:75px"><span>100.00</span></div>
<div class="b" style="left:1120px;top:1123px;width:75px;height:24px;background:#e3effc"></div>
<div class="b" style="left:1196px;top:1123px;width:76px;height:24px;background:#e3effc"></div>
<div class="b" style="left:1273px;top:1123px;width:74px;height:24px;background:#e3effc"></div>
</body></html>
